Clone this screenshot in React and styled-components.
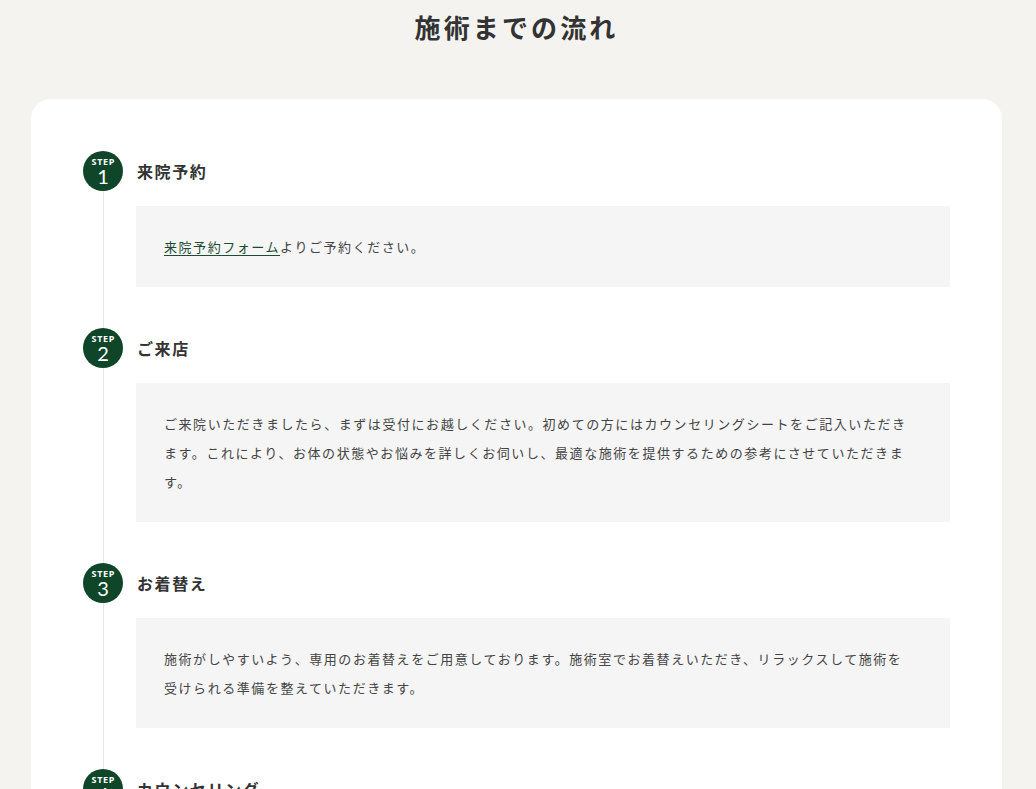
import React from 'react';
import styled, { createGlobalStyle } from 'styled-components';

const GlobalStyle = createGlobalStyle`
  html, body {
    margin: 0;
    padding: 0;
    background: #f4f3ef;
  }
  body {
    font-family: "Noto Sans CJK JP", "Noto Sans", sans-serif;
    color: #444;
  }
`;

const Page = styled.div`
  padding: 7px 34px 0 31px;
`;

const PageTitle = styled.h2`
  margin: 0 0 53px;
  text-align: center;
  font-size: 26px;
  line-height: 39px;
  font-weight: 700;
  letter-spacing: 0.12em;
  color: #333;
`;

const Card = styled.div`
  background: #fff;
  border-radius: 20px 20px 0 0;
  padding: 52px 52px 0;
`;

const StepList = styled.ol`
  list-style: none;
  margin: 0;
  padding: 0;
`;

const StepItem = styled.li`
  display: grid;
  grid-template-columns: 40px 1fr;
  column-gap: 14px;
`;

const Badge = styled.div`
  width: 40px;
  height: 40px;
  border-radius: 50%;
  background: #0f4528;
  color: #fff;
  display: flex;
  flex-direction: column;
  align-items: center;
  justify-content: center;
  padding-top: 1px;
  box-sizing: border-box;
  font-family: "Noto Sans", sans-serif;
`;

const BadgeLabel = styled.span`
  font-size: 9px;
  line-height: 10px;
  font-weight: 700;
  letter-spacing: 0.08em;
  margin-left: 0.08em;
`;

const BadgeNumber = styled.span`
  font-family: Lato, "Noto Sans", sans-serif;
  font-size: 20px;
  line-height: 19px;
  font-weight: 400;
`;

const StepTitle = styled.h3`
  margin: 0;
  align-self: center;
  font-size: 16px;
  font-weight: 700;
  letter-spacing: 0.1em;
  color: #333;
`;

const Rail = styled.div`
  justify-self: center;
  width: 1px;
  background: #e6e6e6;
`;

const StepBody = styled.div`
  padding: 15px 0 41px;
  margin-left: -1px;
`;

const Box = styled.div`
  background: #f4f5f4;
  padding: 26px 36px 26px 28px;
  font-size: 13px;
  line-height: 29px;
  letter-spacing: 0.12em;
  color: #444;
`;

const TextLink = styled.a`
  color: #1d4a30;
  text-decoration: underline;
  text-underline-offset: 3px;
`;

const steps = [
  {
    title: '来院予約',
    body: (
      <>
        <TextLink href="#">来院予約フォーム</TextLink>よりご予約ください。
      </>
    ),
  },
  {
    title: 'ご来店',
    body: 'ご来院いただきましたら、まずは受付にお越しください。初めての方にはカウンセリングシートをご記入いただきます。これにより、お体の状態やお悩みを詳しくお伺いし、最適な施術を提供するための参考にさせていただきます。',
  },
  {
    title: 'お着替え',
    body: '施術がしやすいよう、専用のお着替えをご用意しております。施術室でお着替えいただき、リラックスして施術を受けられる準備を整えていただきます。',
  },
  {
    title: 'カウンセリング',
    body: 'カウンセリングシートをもとに、お体の状態やお悩みを詳しくお伺いいたします。',
  },
];

const App = () => (
  <>
    <GlobalStyle />
    <Page>
      <PageTitle>施術までの流れ</PageTitle>
      <Card>
        <StepList>
          {steps.map((step, i) => (
            <StepItem key={step.title}>
              <Badge>
                <BadgeLabel>STEP</BadgeLabel>
                <BadgeNumber>{i + 1}</BadgeNumber>
              </Badge>
              <StepTitle>{step.title}</StepTitle>
              <Rail />
              <StepBody>
                <Box>{step.body}</Box>
              </StepBody>
            </StepItem>
          ))}
        </StepList>
      </Card>
    </Page>
  </>
);

export default App;
